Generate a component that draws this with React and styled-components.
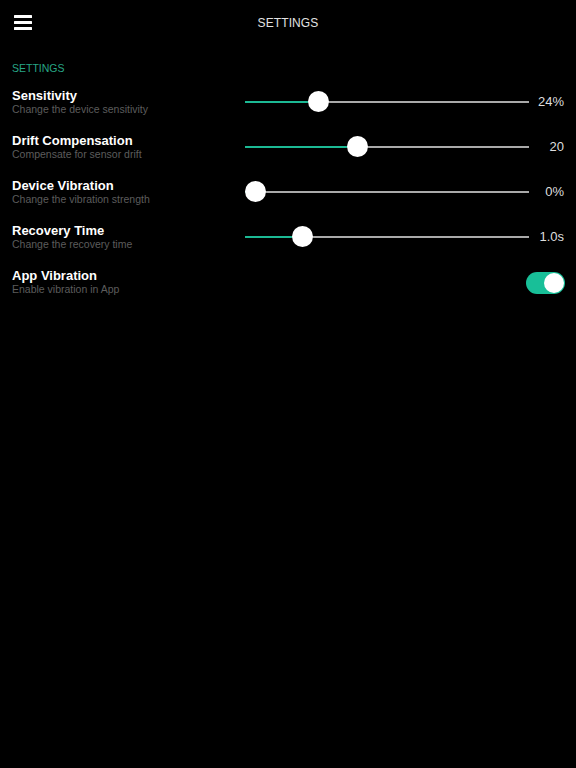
import React from "react";
import styled, { createGlobalStyle } from "styled-components";

const Global = createGlobalStyle`
  html, body { margin: 0; padding: 0; background: #000; }
  body { font-family: "Liberation Sans", Arial, Helvetica, sans-serif; color: #fff; }
  * { box-sizing: border-box; }
`;

const Page = styled.div`
  width: 576px;
  min-height: 768px;
  background: #000;
`;

const TopBar = styled.header`
  height: 44px;
  display: grid;
  grid-template-columns: 60px 1fr 60px;
  align-items: center;
`;

const MenuButton = styled.button`
  background: none;
  border: 0;
  padding: 0;
  margin: 1px 0 0 14px;
  width: 18px;
  height: 15px;
  display: flex;
  flex-direction: column;
  justify-content: space-between;
  cursor: pointer;
`;

const MenuBar = styled.span`
  display: block;
  height: 3px;
  width: 18px;
  background: #fff;
  border-radius: 0.5px;
`;

const Title = styled.h1`
  margin: 2px 0 0;
  text-align: center;
  font-size: 12px;
  font-weight: 400;
  color: #e2e2e2;
  letter-spacing: 0.1px;
`;

const Content = styled.main`
  padding: 0 12px;
`;

const SectionLabel = styled.div`
  margin-top: 18px;
  margin-bottom: 6px;
  height: 12px;
  line-height: 12px;
  font-size: 10.5px;
  color: #27a686;
`;

const Row = styled.div`
  height: 45px;
  display: grid;
  grid-template-columns: 233px 1fr 35px;
  align-items: center;
`;

const Labels = styled.div`
  display: flex;
  flex-direction: column;
  margin-top: -2px;
`;

const RowTitle = styled.div`
  font-size: 13px;
  line-height: 15px;
  font-weight: 700;
  color: #fff;
`;

const RowSub = styled.div`
  font-size: 10.5px;
  line-height: 13px;
  color: #5c5c5c;
`;

const Track = styled.div`
  position: relative;
  height: 2px;
  background: #a9a9a9;
  margin-top: -2px;
`;

const Fill = styled.div`
  position: absolute;
  left: 0;
  top: 0;
  height: 2px;
  background: #1cb994;
`;

const Thumb = styled.div`
  position: absolute;
  top: 50%;
  width: 21px;
  height: 21px;
  margin-top: -10.5px;
  border-radius: 50%;
  background: #fff;
  box-shadow: 0 1px 2px rgba(0, 0, 0, 0.3);
`;

const Value = styled.div`
  text-align: right;
  font-size: 13px;
  color: #dedede;
  margin-top: -2px;
`;

const ToggleCell = styled.div`
  grid-column: 2 / 4;
  display: flex;
  justify-content: flex-end;
`;

const Toggle = styled.div`
  width: 39px;
  height: 22px;
  border-radius: 11px;
  background: ${(p) => (p.$on ? "#18bf98" : "#444")};
  position: relative;
  margin-right: -1px;
`;

const ToggleKnob = styled.div`
  position: absolute;
  top: 1px;
  left: ${(p) => (p.$on ? "18px" : "1px")};
  width: 20px;
  height: 20px;
  border-radius: 50%;
  background: #fff;
`;

function Slider({ fraction }) {
  const TRACK = 284;
  const THUMB = 21;
  const left = fraction * (TRACK - THUMB);
  return (
    <Track>
      <Fill style={{ width: left + THUMB / 2 }} />
      <Thumb style={{ left }} />
    </Track>
  );
}

const rows = [
  { title: "Sensitivity", sub: "Change the device sensitivity", f: 0.24, value: "24%" },
  { title: "Drift Compensation", sub: "Compensate for sensor drift", f: 0.386, value: "20" },
  { title: "Device Vibration", sub: "Change the vibration strength", f: 0, value: "0%" },
  { title: "Recovery Time", sub: "Change the recovery time", f: 0.18, value: "1.0s" },
];

export default function App() {
  return (
    <>
      <Global />
      <Page>
        <TopBar>
          <MenuButton aria-label="menu">
            <MenuBar />
            <MenuBar />
            <MenuBar />
          </MenuButton>
          <Title>SETTINGS</Title>
          <div />
        </TopBar>
        <Content>
          <SectionLabel>SETTINGS</SectionLabel>
          {rows.map((r) => (
            <Row key={r.title}>
              <Labels>
                <RowTitle>{r.title}</RowTitle>
                <RowSub>{r.sub}</RowSub>
              </Labels>
              <Slider fraction={r.f} />
              <Value>{r.value}</Value>
            </Row>
          ))}
          <Row>
            <Labels>
              <RowTitle>App Vibration</RowTitle>
              <RowSub>Enable vibration in App</RowSub>
            </Labels>
            <ToggleCell>
              <Toggle $on>
                <ToggleKnob $on />
              </Toggle>
            </ToggleCell>
          </Row>
        </Content>
      </Page>
    </>
  );
}
